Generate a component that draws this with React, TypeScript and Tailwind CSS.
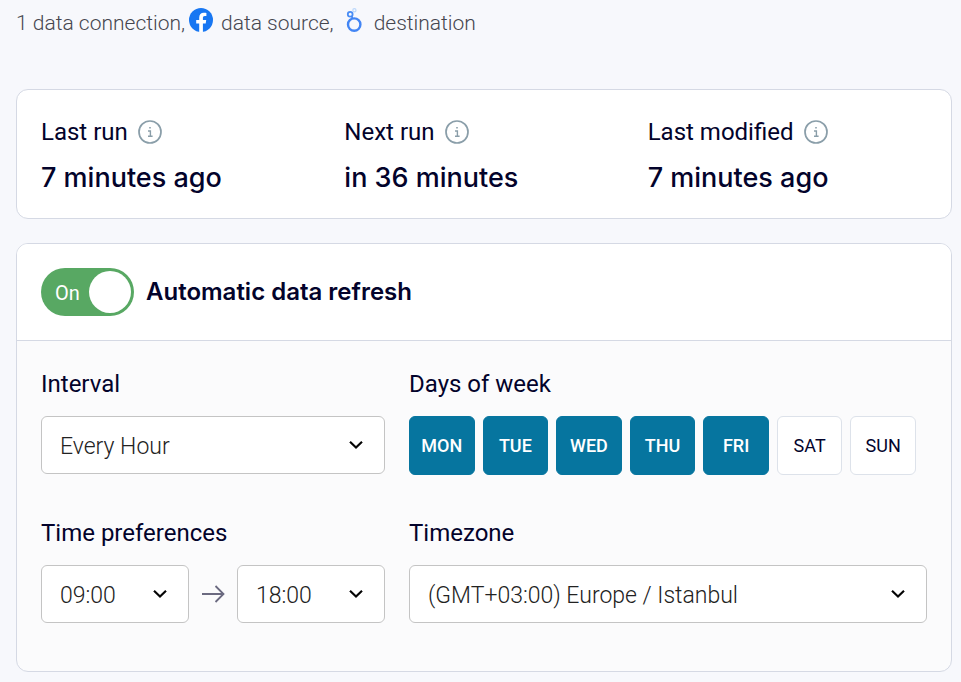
import { useState } from "react";
import type { ReactNode } from "react";

function InfoIcon() {
  return (
    <svg viewBox="0 0 24 24" className="size-6" fill="none" stroke="#8a9ea9" aria-hidden="true">
      <circle cx="12" cy="12" r="11" strokeWidth="1.7" />
      <path d="M10 11h2.4v5M10 16.3h4.6" strokeWidth="1.4" />
      <path d="M11.2 7.8h1.6" strokeWidth="1.6" />
    </svg>
  );
}

function FacebookLogo() {
  return (
    <svg viewBox="0 0 24 24" className="size-6" role="img" aria-label="Facebook">
      <circle cx="12" cy="12" r="12" fill="#1877f2" />
      <path
        fill="#fff"
        d="M16.7 15.5l.5-3.5h-3.3V9.8c0-1 .5-1.9 2-1.9h1.5V4.9s-1.4-.2-2.7-.2c-2.7 0-4.5 1.7-4.5 4.7V12h-3v3.5h3v8.4a12 12 0 0 0 3.7 0v-8.4z"
      />
    </svg>
  );
}

function LookerLogo() {
  return (
    <svg viewBox="0 0 16 26" className="h-[26px] w-4" fill="none" role="img" aria-label="Looker Studio">
      <circle cx="8.2" cy="17.6" r="6.2" stroke="#4285f4" strokeWidth="2.4" />
      <circle cx="4.2" cy="7.2" r="2.4" stroke="#4a8df5" strokeWidth="1.8" />
      <path d="M5.6 9.1l.9 2.2" stroke="#4285f4" strokeWidth="1.6" />
      <circle cx="8.4" cy="3.2" r="1.6" stroke="#bcd8fb" strokeWidth="1.2" />
    </svg>
  );
}

function Chevron() {
  return (
    <svg
      viewBox="0 0 14 9"
      className="pointer-events-none absolute top-1/2 right-[22px] h-[9px] w-[14px] -translate-y-1/2"
      fill="none"
      stroke="#050505"
      strokeWidth="2.2"
      aria-hidden="true"
    >
      <path d="M1 1.2l6 5.8 6-5.8" />
    </svg>
  );
}

function Stat({ label, value }: { label: string; value: string }) {
  return (
    <div>
      <dt className="flex items-center gap-[10px] text-2xl leading-8 font-normal">
        {label}
        <button type="button" aria-label={`About ${label.toLowerCase()}`}>
          <InfoIcon />
        </button>
      </dt>
      <dd className="mt-3 font-[Inter,sans-serif] text-[27px] leading-9 font-medium">{value}</dd>
    </div>
  );
}

function Field({ label, id, children }: { label: string; id: string; children: ReactNode }) {
  return (
    <div>
      <label htmlFor={id} className="mb-4 block text-2xl leading-8">
        {label}
      </label>
      {children}
    </div>
  );
}

function Select({ id, label, options }: { id: string; label?: string; options: string[] }) {
  return (
    <div className="relative min-w-0 flex-1">
      <select
        id={id}
        aria-label={label}
        className="block h-[58px] w-full appearance-none rounded-md border border-[#c4c4c4] bg-white pt-1 pr-10 pl-[18px] text-[23px] font-light text-[#222]"
      >
        {options.map((option) => (
          <option key={option}>{option}</option>
        ))}
      </select>
      <Chevron />
    </div>
  );
}

const DAYS = ["MON", "TUE", "WED", "THU", "FRI", "SAT", "SUN"];

export default function App() {
  const [enabled, setEnabled] = useState(true);
  const [days, setDays] = useState(["MON", "TUE", "WED", "THU", "FRI"]);

  const toggleDay = (day: string) =>
    setDays((current) => (current.includes(day) ? current.filter((d) => d !== day) : [...current, day]));

  return (
    <main className="min-h-screen bg-[#f7f8fc] pt-2 pr-[9px] pb-[10px] pl-4 font-[Roboto,sans-serif] text-[#03032b]">
      <p className="flex h-7 items-center gap-2 text-[21px] leading-7 font-light text-[#45464f]">
        <span className="pt-[2px]">1 data connection,</span>
        <span className="-mt-1 -ml-1">
          <FacebookLogo />
        </span>
        <span className="pt-[2px]">data source,</span>
        <span className="-mt-1 mr-1 ml-1">
          <LookerLogo />
        </span>
        <span className="pt-[2px]">destination</span>
      </p>

      <dl className="mt-[53px] grid grid-cols-3 gap-6 rounded-xl border border-[#d5d9e4] bg-white px-6 pt-[26px] pb-[22px]">
        <Stat label="Last run" value="7 minutes ago" />
        <Stat label="Next run" value="in 36 minutes" />
        <Stat label="Last modified" value="7 minutes ago" />
      </dl>

      <section className="mt-6 overflow-hidden rounded-xl border border-[#d5d9e4] bg-[#fbfbfc]">
        <header className="border-b border-[#d5d9e4] bg-white p-6">
          <label className="flex cursor-pointer items-center gap-3">
            <input
              type="checkbox"
              role="switch"
              className="peer sr-only"
              checked={enabled}
              onChange={() => setEnabled(!enabled)}
            />
            <span className="flex h-12 w-[93px] flex-row-reverse items-center justify-between rounded-full bg-[#9aa3ad] pr-[14px] pl-[3px] text-xl text-white peer-checked:flex-row peer-checked:bg-[#58a863] peer-checked:pr-[3px] peer-checked:pl-[14px]">
              <span className="pt-[2px]">{enabled ? "On" : "Off"}</span>
              <span className="size-[42px] rounded-full bg-white" />
            </span>
            <span className="font-[Inter,sans-serif] text-2xl font-semibold">Automatic data refresh</span>
          </label>
        </header>

        <div className="grid grid-cols-[344fr_518fr] gap-x-6 gap-y-[42px] px-6 pt-[27px] pb-12">
          <Field label="Interval" id="interval">
            <Select id="interval" options={["Every Hour", "Every Day", "Every Week"]} />
          </Field>

          <div role="group" aria-labelledby="days">
            <h3 id="days" className="mb-4 text-2xl leading-8">
              Days of week
            </h3>
            <div className="grid grid-cols-7 gap-2 pr-[11px]">
              {DAYS.map((day) => (
                <button
                  key={day}
                  type="button"
                  aria-pressed={days.includes(day)}
                  onClick={() => toggleDay(day)}
                  className="h-[59px] rounded-md border border-[#dde2ea] bg-white text-lg aria-pressed:border-[#06759f] aria-pressed:bg-[#06759f] aria-pressed:font-medium aria-pressed:text-white"
                >
                  {day}
                </button>
              ))}
            </div>
          </div>

          <Field label="Time preferences" id="from">
            <div className="flex items-center gap-3">
              <Select id="from" options={["09:00", "10:00", "11:00"]} />
              <svg viewBox="0 0 24 20" className="h-5 w-6" fill="none" stroke="#6b6a80" strokeWidth="1.8" aria-hidden="true">
                <path d="M1 10h21.5M14.5 2l8 8-8 8" />
              </svg>
              <Select id="to" label="End time" options={["18:00", "19:00", "20:00"]} />
            </div>
          </Field>

          <Field label="Timezone" id="timezone">
            <Select id="timezone" options={["(GMT+03:00) Europe / Istanbul", "(GMT+00:00) Europe / London"]} />
          </Field>
        </div>
      </section>
    </main>
  );
}
